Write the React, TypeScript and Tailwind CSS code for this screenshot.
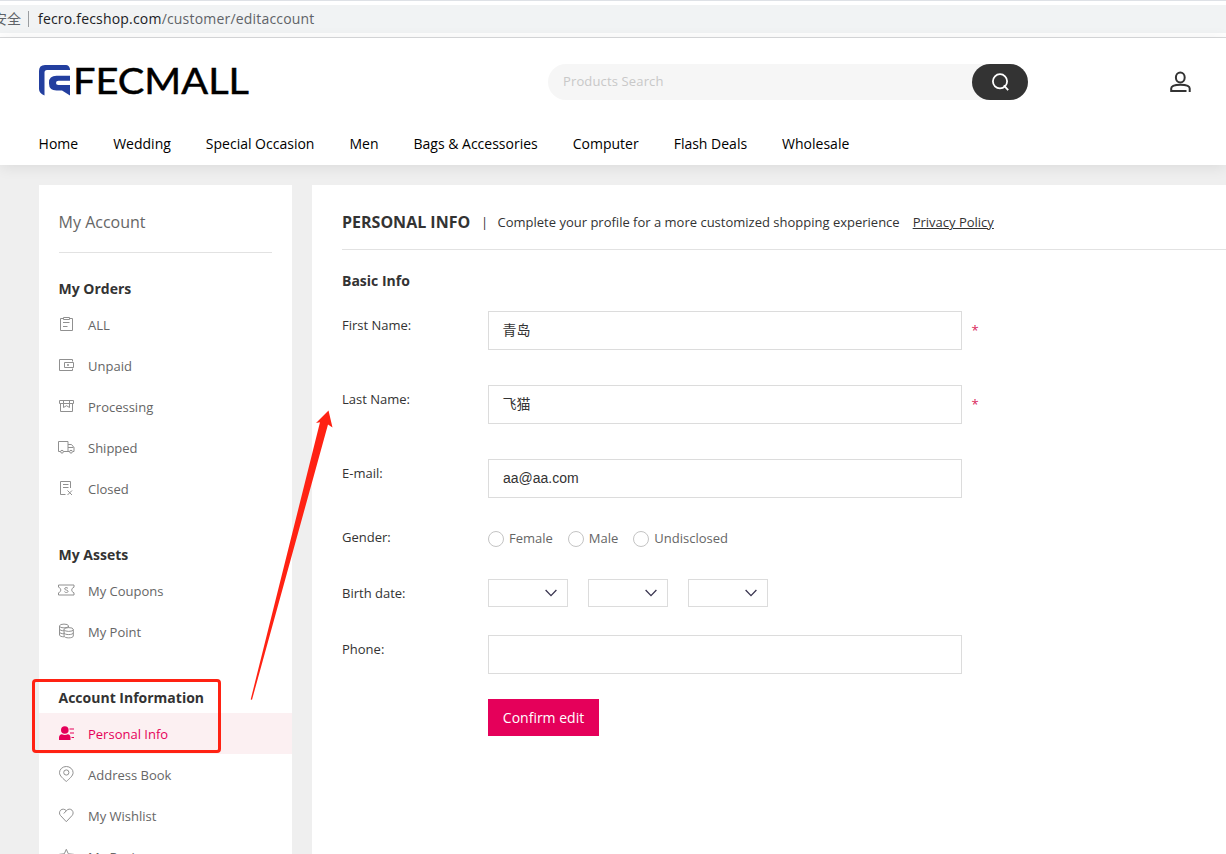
import type { ReactNode } from 'react';

const navItems = ['Home', 'Wedding', 'Special Occasion', 'Men', 'Bags & Accessories', 'Computer', 'Flash Deals', 'Wholesale'];

const icons: Record<string, ReactNode> = {
  all: (
    <>
      <path d="M5 2.500H2.500v12h12v-12H12" />
      <path d="M5.500 1.500h6v2h-6zM5 6.500h6.500M5 10.500h4.500" />
    </>
  ),
  unpaid: (
    <>
      <path d="M14.500 4.500v-2h-13v11h13v-2" />
      <path d="M15.500 5.500h-9v5h9z" />
      <path d="M9.500 7.500h1v1h-1z" />
    </>
  ),
  processing: (
    <>
      <path d="M1.500 2.500h14v3h-14zM2.500 5.500v8h12v-8" />
      <path d="M5.500 2.500v7l3-1.800 3 1.800v-7" />
    </>
  ),
  shipped: (
    <>
      <path d="M2.500 12.500H.5v-10h9.500v10H5.500M10 5.500h3.500l2.500 3v4h-1M10 12.500h1.500M10 8.500h5.500" />
      <circle cx="4" cy="12.700" r="1.400" />
      <circle cx="13" cy="12.700" r="1.400" />
    </>
  ),
  closed: (
    <>
      <path d="M12.500 8V1.500h-10v13h5M5 4.500h5.500M5 7.500h5.500" />
      <path d="M9.500 10.500l4.500 4.500M14 10.500L9.500 15" />
    </>
  ),
  coupons: (
    <>
      <path d="M.5 3h15.500v2.200c-3 1-3 4.600 0 5.600V13H.5v-2.200c3-1 3-4.600 0-5.600z" />
      <path d="M10 6.500C9.300 5.200 6.500 5.300 6.600 6.900c.2 1.500 3.400.8 3.500 2.400.1 1.400-2.900 1.700-3.700.3" />
    </>
  ),
  point: (
    <>
      <ellipse cx="6" cy="3" rx="4.500" ry="1.900" />
      <path d="M1.500 3v9c0 1 2 1.800 4.500 1.800M10.500 3v1.500M1.500 6c0 1 2 1.800 4.500 1.800M1.500 9c0 1 2 1.800 4.500 1.800" />
      <ellipse cx="10.700" cy="6.500" rx="4.600" ry="1.900" />
      <path d="M6.100 6.500V13c0 2.500 9.200 2.500 9.200 0V6.500M6.100 9.700c0 2.500 9.200 2.500 9.200 0" />
    </>
  ),
  personal: (
    <g fill="#e5005a" stroke="none">
      <circle cx="6.800" cy="5" r="3.800" />
      <path d="M1 15v-2.500c0-2 1.200-2.900 2.900-3.200 1.700 1 4.200 1 5.900 0 1.700.3 2.700 1.200 2.700 3.200V15zM11.500 3.500H16v1h-4.500zM12 7.500h4v1h-4zM13.500 12H16v1h-2.500z" />
    </g>
  ),
  address: (
    <>
      <path d="M8.300 15.500C5.300 12.800 1.500 9.800 1.500 6.700a6.800 6.200 0 0 1 13.600 0c0 3.100-3.800 6.100-6.800 8.800z" />
      <circle cx="8.300" cy="6.500" r="2.600" />
    </>
  ),
  wishlist: <path d="M5.800 6.500L8.300 3.700c1.800-2 4.200-2 5.700-.5 1.500 1.600 1.400 3.800.2 5.200L8.300 14.700 2.400 8.400C1.200 7 1.100 4.800 2.600 3.200c1.600-1.600 4-1.300 5.700.5" />,
  reviews: <path d="M8.300 1.300l2 4.500 5 .5-3.700 3.300 1 4.900L8.300 12 4 14.500l1-4.900-3.700-3.300 5-.5z" />,
};

const groups = [
  {
    title: 'My Orders',
    items: [
      { icon: 'all', label: 'ALL' },
      { icon: 'unpaid', label: 'Unpaid' },
      { icon: 'processing', label: 'Processing' },
      { icon: 'shipped', label: 'Shipped' },
      { icon: 'closed', label: 'Closed' },
    ],
  },
  {
    title: 'My Assets',
    items: [
      { icon: 'coupons', label: 'My Coupons' },
      { icon: 'point', label: 'My Point' },
    ],
  },
  {
    title: 'Account Information',
    items: [
      { icon: 'personal', label: 'Personal Info', active: true },
      { icon: 'address', label: 'Address Book' },
      { icon: 'wishlist', label: 'My Wishlist' },
      { icon: 'reviews', label: 'My Review' },
    ],
  },
];

function AddressBar() {
  return (
    <div className="h-[38px] shrink-0 border-t border-b border-t-[#dee1e6] border-b-[#d9dadc] pt-1">
      <div className="flex h-7 items-center overflow-hidden bg-[#f1f3f4] text-[14px] text-[#5f6368]">
        <span className="-mt-[2px] -ml-[7px] font-['Noto_Sans_CJK_SC',sans-serif]">安全</span>
        <span className="ml-[7px] h-4 w-px bg-[#9a9da0]" />
        <span className="-mt-[2px] ml-[9px] tracking-[0.19px]">
          <span className="text-[#202124]">fecro.fecshop.com</span>/customer/editaccount
        </span>
      </div>
    </div>
  );
}

function Logo() {
  return (
    <svg width="211" height="32" viewBox="0 0 211 32" className="block overflow-visible">
      <path
        d="M0 7Q0 1 6 1H27Q30 1 31 5V6H8Q5.500 6 5.500 8.500V31.500Q0 29 0 25ZM31 11.800V16.700H19.500Q17 16.700 17 18.900T19.500 21H31V31.500L23 26.400H17.500Q10 26.400 10 19.500V18.500Q10 11.800 17.500 11.800Z"
        fill="#233f9f"
      />
      <text x="34" y="30" textLength="176" lengthAdjust="spacingAndGlyphs" fontSize="37.500" fill="#000" stroke="#000" strokeWidth="0.500" className="font-['Lato',sans-serif]">
        FECMALL
      </text>
    </svg>
  );
}

function Header() {
  return (
    <header className="relative z-10 h-[127px] shrink-0 bg-white pl-[39px] shadow-[0_2px_14px_rgba(0,0,0,0.09)]">
      <div className="flex h-[88px] items-center">
        <div className="w-[509px] -mt-1">
          <Logo />
        </div>
        <div className="flex h-9 w-[480px] items-center justify-between rounded-full bg-[#f6f6f6]">
          <span className="pl-[15px] text-[13px] tracking-[0.14px] text-[#c8c8c8]">Products Search</span>
          <button className="flex h-9 w-14 items-center justify-center rounded-full bg-[#333]">
            <svg width="20" height="20" viewBox="0 0 20 20" fill="none" stroke="#fff" strokeWidth="1.800">
              <circle cx="10" cy="9.300" r="7.100" />
              <path d="M13.800 13.300l4.400 4.800" />
            </svg>
          </button>
        </div>
        <svg className="ml-[141px]" width="22" height="22" viewBox="0 0 22 22" fill="none" stroke="#333" strokeWidth="2">
          <ellipse cx="11.300" cy="6.500" rx="4.400" ry="4.900" />
          <path d="M17.500 20H2.200v-2.500c0-5 18.500-5 18.500 0V21" />
        </svg>
      </div>
      <nav className="-ml-[0.4px] flex gap-[35px] text-[14px] leading-9 text-black">
        {navItems.map((item) => (
          <span key={item} className="whitespace-nowrap">{item}</span>
        ))}
      </nav>
    </header>
  );
}

function Sidebar() {
  return (
    <aside className="w-[253px] shrink-0 overflow-hidden bg-white">
      <h2 className="mx-5 mb-[21px] h-[68px] border-b border-[#e2e2e2] pt-[25px] text-[16px] leading-6 text-[#666]">
        <span className="-ml-[0.4px]">My Account</span>
      </h2>
      {groups.map((group) => (
        <section key={group.title} className="mb-[31px]">
          <h3 className="h-[30px] pl-[19.5px] text-[14px] leading-[30px] font-bold text-[#333]">{group.title}</h3>
          {group.items.map((item) => (
            <div
              key={item.label}
              className={`flex h-[41px] items-center pt-[2px] pl-[19px] text-[13px] ${'active' in item ? 'bg-[#fcf0f2] text-[#e5005a]' : 'text-[#666]'}`}
            >
              <svg width="17" height="16" viewBox="0 0 17 16" fill="none" stroke="#909090" strokeWidth="1" className="-mt-[3px] mr-[13px]">
                {icons[item.icon]}
              </svg>
              <span>{item.label}</span>
            </div>
          ))}
        </section>
      ))}
    </aside>
  );
}

function Field({ label, value, required, cjk }: { label: string; value?: string; required?: boolean; cjk?: boolean }) {
  return (
    <div className="flex h-[39px]">
      <label className="w-[146px] pt-[4px] leading-5">{label}</label>
      <div
        className={`flex w-[474px] items-center border border-[#dcdcdc] text-[14px] ${
          cjk ? "pb-[2px] pl-[13.5px] font-['Noto_Sans_CJK_SC',sans-serif]" : "pl-[14px] font-['Liberation_Sans',sans-serif]"
        }`}
      >
        {value}
      </div>
      {required && <span className="pt-[9px] pl-[9.5px] leading-5 text-[#d9265a]">*</span>}
    </div>
  );
}

function Main() {
  return (
    <main className="min-w-0 flex-1 bg-white pl-[30px] text-[13px] text-[#333]">
      <div className="flex h-[65px] items-center border-b border-[#e2e2e2] pt-[10px] whitespace-nowrap">
        <h1 className="w-[139px] text-[16px] font-bold">PERSONAL INFO</h1>
        <span className="w-[16.5px] pt-[2px]">|</span>
        <span className="pt-[2px]">Complete your profile for a more customized shopping experience</span>
        <a className="ml-[13px] pt-[2px] underline">Privacy Policy</a>
      </div>
      <h2 className="mt-[21px] text-[14px] leading-5 font-bold">Basic Info</h2>
      <form className="mt-5 flex flex-col">
        <div className="flex flex-col gap-[35px]">
          <Field label="First Name:" value="青岛" required cjk />
          <Field label="Last Name:" value="飞猫" required cjk />
          <Field label="E-mail:" value="aa@aa.com" />
        </div>
        <div className="mt-[29px] flex h-6 items-center">
          <span className="-mt-[2px] w-[146px]">Gender:</span>
          {['Female', 'Male', 'Undisclosed'].map((option) => (
            <label key={option} className="mr-[15px] flex items-center text-[#666]">
              <span className="mr-[5px] size-4 rounded-full border border-[#c4c4c4]" />
              {option}
            </label>
          ))}
        </div>
        <div className="mt-7 flex h-7 items-center">
          <span className="w-[146px] pt-[2px]">Birth date:</span>
          <div className="flex gap-5">
            {['year', 'month', 'day'].map((part) => (
              <div key={part} className="flex h-7 w-20 items-center justify-end border border-[#dcdcdc] pr-[10px]">
                <svg width="12" height="8" viewBox="0 0 12 8" fill="none" stroke="#3a3550" strokeWidth="1.300">
                  <path d="M.6 1l5.400 5.600L11.400 1" />
                </svg>
              </div>
            ))}
          </div>
        </div>
        <div className="mt-7">
          <Field label="Phone:" />
        </div>
        <button type="button" className="mt-[25px] ml-[146px] h-[37px] w-[111px] bg-[#e5005a] text-[14px] text-white">
          Confirm edit
        </button>
      </form>
    </main>
  );
}

function Annotations() {
  return (
    <>
      <div className="absolute top-[679px] left-[32px] z-20 h-[74px] w-[189px] rounded-[4px] border-3 border-[#ff2213]" />
      <svg className="absolute top-[400px] left-[240px] z-20" width="100" height="310" viewBox="0 0 100 310">
        <path d="M88.500 10.500L92.500 27.500 88 24.500 12 299.800 10.700 299.400 80 22.300 76 23Z" fill="#ff2213" />
      </svg>
    </>
  );
}

export default function App() {
  return (
    <div className="relative flex h-[854px] w-[1226px] flex-col overflow-hidden bg-white font-['Open_Sans',sans-serif]">
      <AddressBar />
      <Header />
      <div className="flex min-h-0 flex-1 gap-5 bg-[#efefef] pt-5 pl-[39px]">
        <Sidebar />
        <Main />
      </div>
      <Annotations />
    </div>
  );
}
